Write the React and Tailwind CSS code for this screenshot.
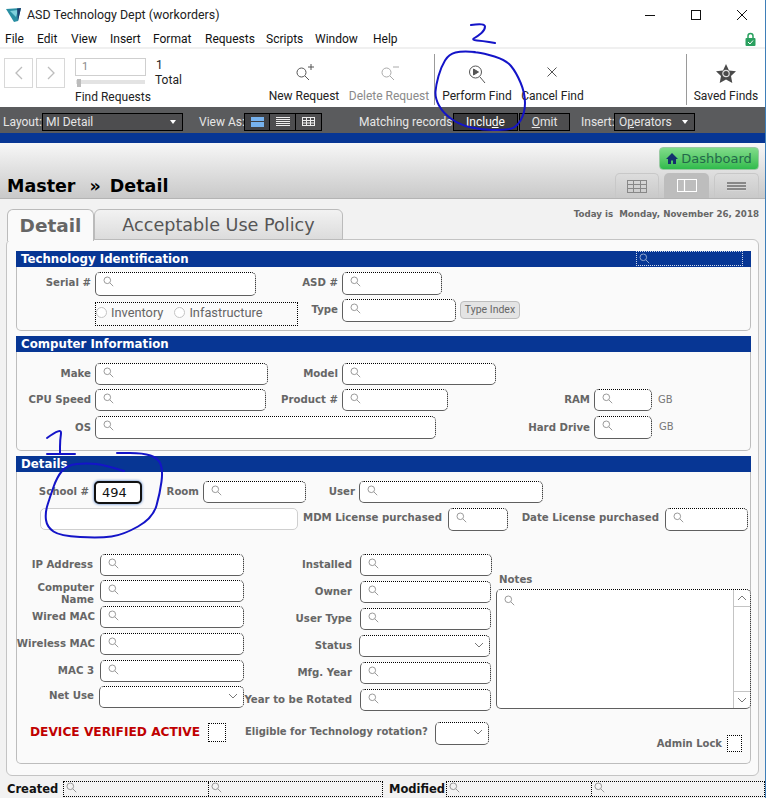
import React from "react";

const UI = "font-['Roboto',sans-serif]";
const DV = "font-['DejaVu_Sans',sans-serif] font-bold";

function Mag({ className = "text-[#9a9a9a]", size = 11 }) {
  return (
    <svg width={size} height={size} viewBox="0 0 11 11" fill="none" stroke="currentColor" strokeWidth="1" className={`shrink-0 ${className}`}>
      <circle cx="4.3" cy="4.3" r="3.3" />
      <path d="M6.8 6.8 L10.2 10.2" />
    </svg>
  );
}

function Chevron({ className = "" }) {
  return (
    <svg width="10" height="6" viewBox="0 0 10 6" fill="none" stroke="#777" strokeWidth="1" className={className}>
      <path d="M1 1 L5 5 L9 1" />
    </svg>
  );
}

const dot = "border border-solid border-[#5f5f5f] rounded-[5px] [border-top-style:dotted] [border-right-style:dotted] [border-top-color:#000] [border-right-color:#000] bg-white";

function Field({ w, h = 22, mt = 0, ml = 0, select = false }) {
  return (
    <div className={`${dot} relative shrink-0 flex items-start pl-[7px] pt-[3px]`} style={{ width: w, height: h, marginTop: mt, marginLeft: ml }}>
      {!select && <Mag />}
      {select && <Chevron className="absolute right-[5px] top-[6px]" />}
    </div>
  );
}

function Label({ w, h = 22, children, cls = "", gap = 4 }) {
  return (
    <div className={`${DV} shrink-0 text-[10.2px] leading-[12px] text-[#666] flex items-center justify-end text-right whitespace-nowrap ${cls}`} style={{ width: w, height: h, marginRight: gap }}>
      <span>{children}</span>
    </div>
  );
}

function Section({ title, h, children, mag }) {
  return (
    <div className="flex flex-col ml-[9px] w-[735px] border-x border-b border-[#bdbdbd] rounded-b-[5px] bg-[#fafafa] mb-[5px]" style={{ height: h }}>
      <div className={`${DV} h-4 bg-[#073694] text-white text-[11.8px] leading-4 pl-[5px] flex justify-between -mx-px`}>
        <span>{title}</span>
        {mag && (
          <div className="w-[107px] h-[15px] mr-[8px] border border-dotted border-white/80 flex items-center pl-[2px]">
            <Mag className="text-[#8fa6cf]" />
          </div>
        )}
      </div>
      {children}
    </div>
  );
}

function Row({ mt, children, cls = "" }) {
  return <div className={`flex items-start ${cls}`} style={{ marginTop: mt }}>{children}</div>;
}

function Ink({ pts, w = 2 }) {
  let d = `M${pts[0][0]} ${pts[0][1]}`;
  for (let i = 1; i < pts.length - 1; i++) {
    const mx = (pts[i][0] + pts[i + 1][0]) / 2;
    const my = (pts[i][1] + pts[i + 1][1]) / 2;
    d += ` Q${pts[i][0]} ${pts[i][1]} ${mx} ${my}`;
  }
  const last = pts[pts.length - 1];
  d += ` L${last[0]} ${last[1]}`;
  return <path d={d} fill="none" stroke="#1414c8" strokeWidth={w} strokeLinecap="round" strokeLinejoin="round" />;
}

function ToolBtn({ w, label, muted, children }) {
  return (
    <div className="shrink-0 flex flex-col items-center h-full" style={{ width: w }}>
      <div className="h-[38px] flex items-end justify-center pb-[3px]">{children}</div>
      <div className={`text-[12px] leading-[16px] mt-[1px] whitespace-nowrap ${muted ? "text-[#8a8a8a]" : "text-[#222]"}`}>{label}</div>
    </div>
  );
}

function DarkBtn({ w, children, cls = "" }) {
  return (
    <div className={`h-[18px] shrink-0 border border-black flex items-center text-[12px] leading-none text-[#e6e6e6] ${cls}`} style={{ width: w }}>
      {children}
    </div>
  );
}

const menu = [["File", 5], ["Edit", 37], ["View", 71], ["Insert", 110], ["Format", 153], ["Requests", 205], ["Scripts", 266], ["Window", 315], ["Help", 373]];

export default function App() {
  return (
    <div className={`relative w-[766px] h-[798px] overflow-hidden bg-white border-r border-[#3f7fb8] flex flex-col ${UI}`}>
      {/* title bar */}
      <div className="h-[30px] flex items-center shrink-0">
        <svg width="16" height="16" viewBox="0 0 16 16" className="ml-[6px]">
          <path d="M0 2 L15 1 L12 14 L8 15 Z" fill="#2a8fa3" />
          <path d="M4 4 L12 3 L10 10 Z" fill="#7fd0dc" />
          <path d="M11 1.5 L15 1 L12 14 Z" fill="#1d3f6e" />
        </svg>
        <span className="ml-[5px] text-[12.4px] text-[#222] whitespace-nowrap">ASD Technology Dept (workorders)</span>
        <div className="ml-auto flex items-center">
          <svg width="12" height="12" viewBox="0 0 12 12" stroke="#111" fill="none"><path d="M1 6.5 H11" /></svg>
          <svg width="12" height="12" viewBox="0 0 12 12" stroke="#111" fill="none" className="ml-[34px]"><rect x="1.5" y="1.5" width="9" height="9" /></svg>
          <svg width="12" height="12" viewBox="0 0 12 12" stroke="#111" fill="none" className="ml-[34px] mr-[17px]"><path d="M1 1 L11 11 M11 1 L1 11" /></svg>
        </div>
      </div>
      {/* menu */}
      <div className="h-[17px] shrink-0 flex items-center pt-px text-[12px] text-[#111]">
        <div className="flex">
          {menu.map(([m, x], i) => (
            <span key={m} className="whitespace-nowrap" style={{ width: i < menu.length - 1 ? menu[i + 1][1] - x : 30, marginLeft: i === 0 ? x : 0 }}>{m}</span>
          ))}
        </div>
        <svg width="11" height="14" viewBox="0 0 11 14" className="ml-auto mr-[9px]">
          <path d="M3 6 V4 a2.5 2.5 0 0 1 5 0 V6" stroke="#2aa05f" strokeWidth="1.5" fill="none" />
          <rect x="0.5" y="6" width="10" height="8" rx="1" fill="#2aa05f" />
          <path d="M3 10 L5 12 L8 8.5" stroke="#fff" strokeWidth="1" fill="none" />
        </svg>
      </div>
      {/* toolbar */}
      <div className="h-[60px] shrink-0 border-t-2 border-[#f0f0f0] flex">
        <div className="w-[30px] h-[30px] ml-[4px] mt-[9px] border border-[#d8d8d8] flex items-center justify-center">
          <svg width="10" height="16" viewBox="0 0 10 16" fill="none" stroke="#bdbdbd" strokeWidth="1.3"><path d="M8 2 L2 8 L8 14" /></svg>
        </div>
        <div className="w-[30px] h-[30px] ml-[3px] mt-[9px] border border-[#d8d8d8] flex items-center justify-center">
          <svg width="10" height="16" viewBox="0 0 10 16" fill="none" stroke="#bdbdbd" strokeWidth="1.3"><path d="M2 2 L8 8 L2 14" /></svg>
        </div>
        <div className="w-[73px] ml-[9px] mt-[9px] flex flex-col">
          <div className="w-[71px] h-[18px] ml-px border border-[#cfcfcf] text-[11px] leading-[16px] text-[#888] pl-[6px]">1</div>
          <div className="relative mt-[4px] ml-[2px] w-[69px] h-[4px] bg-[#e3e3e3]">
            <div className="absolute left-px -top-px w-[4px] h-[8px] bg-[#bcbcbc]" />
          </div>
          <div className="text-[12px] leading-[16px] mt-[5px] ml-px text-[#222] whitespace-nowrap">Find Requests</div>
        </div>
        <div className="ml-[8px] mt-[9px] text-[12px] leading-[15px] text-[#222] w-[30px]">
          <div className="pl-px">1</div>
          <div>Total</div>
        </div>
        <div className="w-[80px] ml-[80px] shrink-0">
          <ToolBtn w={80} label="New Request">
            <svg width="20" height="20" viewBox="0 0 20 20" fill="none" stroke="#555" strokeWidth="1" className="mb-[2px]"><circle cx="7.5" cy="10.5" r="4.5" /><path d="M11 14 L15 18 M14 5 H20 M17 2 V8" /></svg>
          </ToolBtn>
        </div>
        <ToolBtn w={90} label="Delete Request" muted>
          <svg width="20" height="20" viewBox="0 0 20 20" fill="none" stroke="#aaa" strokeWidth="1" className="mb-[2px]"><circle cx="7.5" cy="10.5" r="4.5" /><path d="M11 14 L15 18 M14 5 H20" /></svg>
        </ToolBtn>
        <div className="w-px h-[51px] bg-[#9a9a9a] mt-[5px] shrink-0" />
        <ToolBtn w={84} label="Perform Find">
          <svg width="18" height="20" viewBox="0 0 18 20" fill="none" stroke="#555" strokeWidth="1"><circle cx="7.5" cy="8" r="6" /><path d="M12 13 L17 19" /><path d="M5.5 5 L10.5 8 L5.5 11 Z" fill="#555" /></svg>
        </ToolBtn>
        <ToolBtn w={67} label="Cancel Find">
          <svg width="10" height="10" viewBox="0 0 10 10" fill="none" stroke="#555" strokeWidth="1" className="mb-[7px]"><path d="M0.5 0.5 L9.5 9.5 M9.5 0.5 L0.5 9.5" /></svg>
        </ToolBtn>
        <div className="w-px h-[51px] bg-[#9a9a9a] mt-[5px] ml-[100px] shrink-0" />
        <ToolBtn w={78} label="Saved Finds">
          <svg width="20" height="19" viewBox="0 0 20 19" className="mb-[1px]"><path d="M10 0 L13 6.5 L20 7.3 L15 12 L16.3 19 L10 15.6 L3.7 19 L5 12 L0 7.3 L7 6.5 Z" fill="#4a4a4a" /><circle cx="10" cy="9.5" r="3.2" fill="none" stroke="#e0e0e0" strokeWidth="1.2" /></svg>
        </ToolBtn>
      </div>
      {/* layout bar */}
      <div className="h-[26px] shrink-0 bg-[#5a5b5d] flex items-center pt-[3px] text-[12px] text-[#e6e6e6] whitespace-nowrap">
        <span className="ml-[3px] w-[39px]">Layout:</span>
        <DarkBtn w={141} cls="pl-[3px] pr-[6px] justify-between bg-[#4d4d4f]">
          <span>MI Detail</span>
          <span className="w-0 h-0 border-x-[3px] border-x-transparent border-t-[4px] border-t-white" />
        </DarkBtn>
        <span className="ml-[16px] w-[45px]">View As:</span>
        <div className="flex h-[18px] border border-black bg-[#4d4d4f]">
          <div className="w-[25px] flex items-center justify-center bg-[#3f4043] border-r border-black">
            <div className="w-[13px] h-[10px] bg-[#76b2ee] border-y border-[#76b2ee] flex items-center"><div className="w-full h-px bg-[#3f4043]" /></div>
          </div>
          <div className="w-[26px] flex items-center justify-center border-r border-black">
            <div className="w-[14px] h-[9px] bg-[repeating-linear-gradient(to_bottom,#eee_0_1px,transparent_1px_2px)]" />
          </div>
          <div className="w-[25px] flex items-center justify-center">
            <svg width="13" height="9" viewBox="0 0 13 9" fill="none" stroke="#eee"><rect x="0.5" y="0.5" width="12" height="8" /><path d="M0 3.5 H13 M0 6 H13 M4.5 0 V9 M8.5 0 V9" /></svg>
          </div>
        </div>
        <span className="ml-[37px] w-[94px]">Matching records:</span>
        <DarkBtn w={65} cls="justify-center bg-[#3a3a3c] text-white"><span>Inclu<u>d</u>e</span></DarkBtn>
        <DarkBtn w={51} cls="justify-center bg-[#4d4d4f] ml-px"><span><u>O</u>mit</span></DarkBtn>
        <span className="ml-[11px] w-[33px]">Insert:</span>
        <DarkBtn w={81} cls="pl-[4px] pr-[6px] justify-between bg-[#4d4d4f]">
          <span>O<u>p</u>erators</span>
          <span className="w-0 h-0 border-x-[3px] border-x-transparent border-t-[4px] border-t-white" />
        </DarkBtn>
      </div>
      <div className="h-[10px] shrink-0 bg-[#073694]" />
      {/* header */}
      <div className="h-[56px] shrink-0 border-b border-[#b4b4b4] bg-gradient-to-b from-[#f7f7f7] to-[#c9c9c9] flex justify-between">
        <div className={`${DV} flex text-[17.5px] leading-[22px] text-black ml-[7px] mt-[32px] whitespace-nowrap`}>
          <span>Master</span>
          <span className="ml-[14px]">»</span>
          <span className="ml-[9px]">Detail</span>
        </div>
        <div className="flex flex-col items-end mr-[6px]">
          <div className={`font-['DejaVu_Sans',sans-serif] mt-[4px] w-[100px] h-[23px] rounded-[4px] bg-gradient-to-b from-[#7fdc8a] to-[#2ebb4c] border border-[#9ac9a3] text-[13px] leading-[20px] text-[#23694a] flex items-center justify-center gap-[3px]`}>
            <svg width="12" height="11" viewBox="0 0 12 11"><path d="M6 0 L12 6 H10 V11 H7 V7.5 H5 V11 H2 V6 H0 Z" fill="#14306e" /></svg>
            <span>Dashboard</span>
          </div>
          <div className="flex mt-[3px] gap-[5px]">
            <div className="w-[44px] h-[25px] rounded-t-[5px] border border-b-0 border-[#c8c8c8] flex items-center justify-center">
              <svg width="20" height="13" viewBox="0 0 20 13" fill="none" stroke="#888"><rect x="0.5" y="0.5" width="19" height="12" /><path d="M0 4.5 H20 M0 8.5 H20 M6.5 0 V13 M13.5 0 V13" /></svg>
            </div>
            <div className="w-[45px] h-[25px] rounded-t-[5px] bg-[#bdbdbd] flex items-center justify-center">
              <svg width="20" height="13" viewBox="0 0 20 13" fill="none" stroke="#fff"><rect x="0.5" y="0.5" width="19" height="12" /><path d="M7.5 0 V13" strokeWidth="1.2" /></svg>
            </div>
            <div className="w-[45px] h-[25px] rounded-t-[5px] border border-b-0 border-[#c8c8c8] flex items-center justify-center">
              <div className="w-[19px] h-[9px] bg-[repeating-linear-gradient(to_bottom,#888_0_2px,#d8d8d8_2px_3px)]" />
            </div>
          </div>
        </div>
      </div>
      {/* body */}
      <div className="flex-1 bg-[#f2f2f2] flex flex-col">
        <div className="flex h-[31px] mt-[10px] shrink-0 relative">
          <div className={`${DV} ml-[7px] w-[87px] h-[32px] rounded-t-[6px] border border-b-0 border-[#bbb] bg-[#fafafa] text-[18.5px] leading-[31px] text-[#666] text-center z-10`}>Detail</div>
          <div className="w-[249px] h-[31px] rounded-t-[6px] border border-[#bbb] bg-gradient-to-b from-[#f2f2f2] to-[#dcdcdc] font-['DejaVu_Sans',sans-serif] text-[17.6px] leading-[31px] text-[#555] text-center whitespace-nowrap">Acceptable Use Policy</div>
          <div className={`${DV} ml-auto mr-[6px] mt-[-1px] text-[8.7px] leading-[12px] text-[#666] whitespace-pre`}>Today is  Monday, November 26, 2018</div>
        </div>
        <div className="ml-[6px] w-[753px] h-[537px] shrink-0 -mt-px border border-[#c4c4c4] rounded-[6px] bg-[#fafafa] pt-[11px]">
          <Section title="Technology Identification" h={80} mag>
            <Row mt={5}>
              <Label w={74} h={22}>Serial #</Label>
              <Field w={161} h={24} />
              <Label w={82} h={22}>ASD #</Label>
              <Field w={100} h={23} />
            </Row>
            <Row mt={3}>
              <div className="ml-[78px] mt-[3px] w-[203px] h-[24px] border border-dotted border-black flex items-center pb-[3px] text-[12.8px] text-[#666]">
                <span className="w-[11px] h-[11px] rounded-full border border-[#c4c4c4] bg-white" />
                <span className="ml-[4px]">Inventory</span>
                <span className="w-[11px] h-[11px] ml-[11px] rounded-full border border-[#c4c4c4] bg-white" />
                <span className="ml-[4px]">Infastructure</span>
              </div>
              <Label w={40} h={22}>Type</Label>
              <Field w={114} h={23} />
              <div className="ml-[4px] mt-[2px] w-[60px] h-[18px] rounded-[4px] border border-[#bdbdbd] bg-[#e4e4e4] text-[10.5px] leading-[16px] text-[#666] text-center">Type Index</div>
            </Row>
          </Section>
          <Section title="Computer Information" h={115}>
            <Row mt={11}>
              <Label w={74}>Make</Label>
              <Field w={173} />
              <Label w={70}>Model</Label>
              <Field w={154} />
            </Row>
            <Row mt={4}>
              <Label w={74}>CPU Speed</Label>
              <Field w={171} />
              <Label w={72}>Product #</Label>
              <Field w={106} />
              <Label w={142}>RAM</Label>
              <Field w={58} />
              <span className="ml-[6px] text-[10px] leading-[22px] font-['DejaVu_Sans',sans-serif] text-[#777]">GB</span>
            </Row>
            <Row mt={5}>
              <Label w={74} h={23}>OS</Label>
              <Field w={341} h={23} />
              <Label w={154} h={23}>Hard Drive</Label>
              <Field w={58} h={23} />
              <span className="ml-[7px] text-[10px] leading-[22px] font-['DejaVu_Sans',sans-serif] text-[#777]">GB</span>
            </Row>
          </Section>
          <Section title="Details" h={308}>
            <Row mt={9}>
              <Label w={72} gap={5}>School #</Label>
              <div className="w-[48px] h-[23px] rounded-[5px] border-2 border-[#111] bg-white text-[13px] leading-[19px] text-[#111] pl-[6px] shadow-[0_0_3px_#3a6fc0] font-['DejaVu_Sans',sans-serif]">494</div>
              <Label w={57}>Room</Label>
              <Field w={103} />
              <Label w={49}>User</Label>
              <Field w={184} />
            </Row>
            <Row mt={4}>
              <div className="ml-[23px] w-[258px] h-[22px] rounded-[5px] border border-[#cfcfcf] bg-white" />
              <Label w={144} gap={6} h={20}>MDM License purchased</Label>
              <Field w={60} h={23} />
              <Label w={151} gap={6} h={20}>Date License purchased</Label>
              <Field w={83} h={23} />
            </Row>
            <div className="flex items-start mt-[23px]">
              <div className="flex flex-col w-[227px] shrink-0">
                <Row mt={0}><Label w={76} gap={7}>IP Address</Label><Field w={144} /></Row>
                <Row mt={4} cls="h-[22px]"><Label w={77} gap={6} h={28}>Computer<br />Name</Label><Field w={144} /></Row>
                <Row mt={4}><Label w={78} gap={5}>Wired MAC</Label><Field w={144} /></Row>
                <Row mt={5}><Label w={78} gap={5}>Wireless MAC</Label><Field w={144} /></Row>
                <Row mt={5}><Label w={77} gap={6}>MAC 3</Label><Field w={144} /></Row>
                <Row mt={4}><Label w={77} gap={5} h={20}>Net Use</Label><Field w={145} select /></Row>
              </div>
              <div className="flex flex-col w-[252px] shrink-0">
                <Row mt={0}><Label w={108} gap={8}>Installed</Label><Field w={132} /></Row>
                <Row mt={5}><Label w={108} gap={8}>Owner</Label><Field w={131} /></Row>
                <Row mt={5}><Label w={108} gap={8}>User Type</Label><Field w={131} /></Row>
                <Row mt={5}><Label w={108} gap={7}>Status</Label><Field w={131} select /></Row>
                <Row mt={5}><Label w={108} gap={8}>Mfg. Year</Label><Field w={131} /></Row>
                <Row mt={5}><Label w={108} gap={8}>Year to be Rotated</Label><Field w={131} /></Row>
              </div>
              <div className="flex flex-col w-[255px] shrink-0 mt-[20px]">
                <div className={`${DV} text-[10.2px] leading-[12px] text-[#666] ml-[3px] mb-[3px]`}>Notes</div>
                <div className={`${dot} relative h-[120px] w-[255px] pl-[7px] pt-[5px]`}>
                  <Mag />
                  <div className="absolute right-0 top-0 bottom-0 w-[17px] border-l border-[#c4c4c4] flex flex-col justify-between">
                    <div className="h-[17px] border-b border-[#c4c4c4] flex items-center justify-center"><Chevron className="rotate-180" /></div>
                    <div className="h-[17px] border-t border-[#c4c4c4] flex items-center justify-center"><Chevron /></div>
                  </div>
                </div>
              </div>
            </div>
            <Row mt={11}>
              <div className={`${DV} ml-[13px] w-[171px] text-[12.2px] leading-[20px] text-[#c00000] whitespace-nowrap`}>DEVICE VERIFIED ACTIVE</div>
              <div className="ml-[7px] w-[18px] h-[19px] mt-px border border-dotted border-black bg-white shrink-0" />
              <div className={`${DV} ml-[19px] w-[190px] text-[10px] leading-[20px] text-[#666] whitespace-nowrap`}>Eligible for Technology rotation?</div>
              <Field w={54} h={23} select />
              <div className={`${DV} ml-auto mt-[15px] text-[10px] leading-[14px] text-[#666] whitespace-nowrap`}>Admin Lock</div>
              <div className="ml-[5px] mr-[8px] mt-[13px] w-[15px] h-[17px] border border-dotted border-black bg-white shrink-0" />
            </Row>
          </Section>
        </div>
        {/* footer */}
        <div className="flex items-start mt-[5px]">
          <span className={`${DV} ml-[7px] w-[56px] text-[11.5px] leading-[16px] text-[#111]`}>Created</span>
          <div className="w-[320px] h-[16px] border border-dotted border-black flex shrink-0">
            <div className="w-[145px] border-r border-dotted border-black pl-[2px]"><Mag /></div>
            <div className="pl-[2px]"><Mag /></div>
          </div>
          <span className={`${DV} ml-[6px] w-[57px] text-[11.5px] leading-[16px] text-[#111]`}>Modified</span>
          <div className="w-[319px] h-[16px] border border-dotted border-black flex shrink-0">
            <div className="w-[145px] border-r border-dotted border-black pl-[2px]"><Mag /></div>
            <div className="pl-[2px]"><Mag /></div>
          </div>
        </div>
      </div>
      {/* blue pen annotations */}
      <svg className="absolute inset-0 pointer-events-none" width="766" height="798">
        <Ink pts={[[475, 52], [462, 51], [449, 54], [441, 67], [436, 85], [435, 98], [443, 113], [460, 125], [483, 130], [503, 130], [516, 128], [525, 113], [525, 93], [516, 72], [506, 60], [483, 53], [472, 52]]} />
        <Ink pts={[[471, 25], [485, 23], [485, 30], [478, 36], [471, 40], [483, 41], [495, 43]]} />
        <Ink pts={[[47, 438], [62, 427], [60, 440], [60, 454]]} />
        <Ink pts={[[47, 454], [75, 454]]} />
        <Ink pts={[[124, 471], [105, 465], [87, 463], [67, 465], [57, 477], [50, 497], [45, 513], [47, 527], [60, 536], [100, 538], [123, 535], [153, 518], [160, 493], [163, 470], [158, 458], [143, 453], [117, 453]]} />
      </svg>
    </div>
  );
}
